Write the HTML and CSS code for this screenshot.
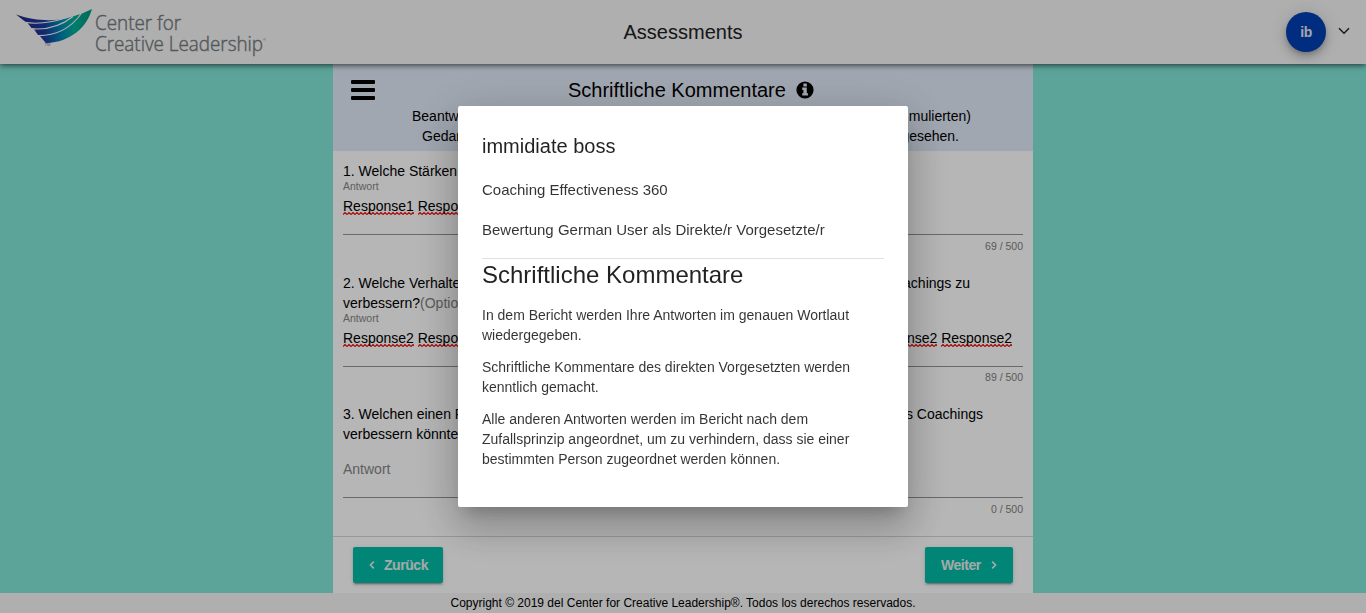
FILE: index.html
```html
<!DOCTYPE html>
<html lang="de">
<head>
<meta charset="utf-8">
<title>Assessments</title>
<link rel="stylesheet" href="styles.css">
</head>
<body>
<div class="app">
  <header class="topbar">
    <svg class="logo" width="270" height="60" viewBox="0 0 270 60">
      <defs>
        <linearGradient id="wing" x1="16" y1="22" x2="88" y2="12" gradientUnits="userSpaceOnUse">
          <stop offset="0" stop-color="#2b2486"/><stop offset=".36" stop-color="#1b3a9c"/>
          <stop offset=".6" stop-color="#0086b4"/><stop offset=".78" stop-color="#00b09a"/><stop offset="1" stop-color="#009a80"/>
        </linearGradient>
      </defs>
      <path fill="url(#wing)" d="M16 14.5C29 19.5 45 21 58 19.8C68 18.8 75 15 80 14.4L92 9C87 27 71 42 46 43.2L39.5 35.5L38 35L33.5 28.5L31.5 28L27.5 23L25 21.5Z"/>
      <path class="feather" d="M24 22.4C40 24.6 54 22 66 17.8M30 28.6C46 30.4 61 26 73 16.5M37 35.6C55 36 70 29 81 14"/>
      <text class="tm" x="44.5" y="46">TM</text>
      <text class="brand" x="95" y="30" textLength="86" lengthAdjust="spacingAndGlyphs">Center for</text>
      <text class="brand" x="95" y="50.5" textLength="168" lengthAdjust="spacingAndGlyphs">Creative Leadership</text>
      <text class="tm" x="263" y="41">®</text>
    </svg>
    <h1 class="topbar-title">Assessments</h1>
    <div class="account">
      <span class="avatar">ib</span>
      <svg width="12" height="8" viewBox="0 0 12 8"><path class="chevron" d="M1 1.2L6 6.2L11 1.2"/></svg>
    </div>
  </header>

  <main class="stage">
    <section class="sheet">
      <div class="intro">
        <div class="intro-head">
          <div class="menu"><i></i><i></i><i></i></div>
          <h2 class="intro-title">Schriftliche Kommentare</h2>
          <svg class="info" width="18" height="18" viewBox="0 0 18 18"><circle cx="9" cy="9" r="8.6"/><path fill="#e1eaf7" d="M7.4 2.6h3.4v2.8H7.4zM6.2 6.6h4.6v5.6H12v2.4H6.2v-2.4h1.2V9H6.2z"/></svg>
        </div>
        <p class="intro-line first"><span>Beantworten Sie</span><span>mulierten)</span></p>
        <p class="intro-line second"><span>Gedanken und</span><span>gesehen.</span></p>
      </div>

      <div class="question q1">
        <p class="ask">1. Welche Stärken</p>
        <p class="label">Antwort</p>
        <p class="answer"><span><u>Response1</u> <u>Response1</u></span></p>
        <p class="count">69 / 500</p>
      </div>
      <div class="question q2">
        <p class="ask split"><span>2. Welche Verhaltens</span><span>Coachings zu</span></p>
        <p class="ask">verbessern?<span class="muted">(Optional)</span></p>
        <p class="label">Antwort</p>
        <p class="answer"><span><u>Response2</u> <u>Response2</u></span><span><u>Response2</u> <u>Response2</u></span></p>
        <p class="count">89 / 500</p>
      </div>
      <div class="question q3">
        <p class="ask split"><span>3. Welchen einen Punkt</span><span>des Coachings</span></p>
        <p class="ask">verbessern könnte</p>
        <p class="answer empty">Antwort</p>
        <p class="count">0 / 500</p>
      </div>

      <div class="actions">
        <button class="btn"><svg width="6" height="8" viewBox="0 0 6 8"><path d="M4.8.6L1.4 4L4.8 7.4"/></svg>Zurück</button>
        <button class="btn next">Weiter<svg width="6" height="8" viewBox="0 0 6 8"><path d="M1.2.6L4.6 4L1.2 7.4"/></svg></button>
      </div>
    </section>
  </main>
  <footer class="footer">Copyright © 2019 del Center for Creative Leadership®. Todos los derechos reservados.</footer>
</div>

<div class="backdrop">
  <div class="dialog" role="dialog">
    <h3 class="dialog-name">immidiate boss</h3>
    <p class="dialog-sub">Coaching Effectiveness 360</p>
    <p class="dialog-sub">Bewertung German User als Direkte/r Vorgesetzte/r</p>
    <hr>
    <h2 class="dialog-title">Schriftliche Kommentare</h2>
    <p class="dialog-text">In dem Bericht werden Ihre Antworten im genauen Wortlaut<br>wiedergegeben.</p>
    <p class="dialog-text">Schriftliche Kommentare des direkten Vorgesetzten werden<br>kenntlich gemacht.</p>
    <p class="dialog-text">Alle anderen Antworten werden im Bericht nach dem<br>Zufallsprinzip angeordnet, um zu verhindern, dass sie einer<br>bestimmten Person zugeordnet werden können.</p>
  </div>
</div>
</body>
</html>
```
FILE: styles.css
```css
* { box-sizing: border-box; }
body { margin: 0; font: 14px/20px "Liberation Sans", Arial, sans-serif; color: #000; overflow: hidden; }
h1, h2, h3, p { margin: 0; font-weight: 400; }
.app { height: 613px; display: flex; flex-direction: column; }
.topbar { height: 64px; flex: none; display: grid; grid-template-columns: 1fr auto 1fr; background: #f5f5f5; box-shadow: 0 1px 6px rgba(0,0,0,.7); z-index: 1; }
.logo { display: block; }
.brand { font: 300 20.5px "Open Sans", sans-serif; fill: #757c7f; stroke: #757c7f; stroke-width: .45px; }
.tm { font-size: 4px; fill: #77808a; }
.feather { fill: none; stroke: #f5f5f5; stroke-width: 1.1px; }
.topbar-title { font-size: 20px; line-height: 64px; color: #212121; }
.account { display: flex; justify-content: flex-end; align-items: center; gap: 12px; padding-right: 16px; }
.avatar { width: 40px; height: 40px; border-radius: 50%; background: #003fb2; color: #e4e8f0; font-weight: 700; letter-spacing: -.4px; line-height: 41px; text-align: center; box-shadow: 0 3px 5px -1px rgba(0,0,0,.2), 0 6px 10px rgba(0,0,0,.14), 0 1px 18px rgba(0,0,0,.12); }
.chevron { fill: none; stroke: #1c2430; stroke-width: 1.5px; }
.account > svg { margin-bottom: 3px; }
.stage { flex: 1; background: #81e5d8; display: flex; justify-content: center; }
.sheet { width: 700px; background: #fff; display: flex; flex-direction: column; }
.intro { height: 87px; background: #e1eaf7; padding-top: 16px; }
.intro-head { display: flex; align-items: center; height: 20px; margin-bottom: 6px; }
.menu { width: 24px; height: 20px; margin-left: 18px; display: flex; flex-direction: column; justify-content: space-between; }
.menu i { height: 4px; background: #000; border-radius: 1px; }
.intro-title { font-size: 20px; margin-left: 193px; }
.info { margin-left: 10px; }
.intro-line { display: flex; justify-content: space-between; }
.first { width: 559px; margin-left: 79px; }
.second { width: 537px; margin-left: 89px; }
.question { padding: 0 10px; }
.q1 { height: 112px; padding-top: 10px; }
.q2 { height: 131px; padding-top: 10px; }
.q3 { height: 142px; padding-top: 10px; }
.split { display: flex; justify-content: space-between; }
.q2 .split { width: 627px; }
.q3 .split { width: 640px; }
.muted { color: #808080; }
.label { font-size: 10.5px; line-height: 11px; color: #858585; }
.answer { height: 43px; padding-top: 4px; border-bottom: 1px solid #949494; display: flex; justify-content: space-between; padding-right: 11px; }
/* Tight red zigzag directly under the baseline */
.answer u { text-decoration: none; padding-bottom: 1px; background: url("data:image/svg+xml,%3Csvg xmlns='http://www.w3.org/2000/svg' width='4' height='3'%3E%3Cpath d='M0 2.5L2 .5L4 2.5' fill='none' stroke='%23f00000' stroke-width='1.1'/%3E%3C/svg%3E") repeat-x 0 100%; }
.answer.empty { height: 54px; padding-top: 15px; color: #858585; }
.count { font-size: 10.5px; line-height: 22px; text-align: right; color: #808080; }
.q2 .count { line-height: 21px; }
.actions { flex: 1; border-top: 1px solid #d5d5d5; display: flex; justify-content: space-between; padding: 10px 20px; }
.btn { height: 36px; width: 90px; padding: 0 0 0 16px; border: 0; border-radius: 2px; background: #00bba7; color: #e6eeee; font: 700 14px "Liberation Sans", Arial, sans-serif; letter-spacing: -.45px; display: flex; align-items: center; gap: 9px; box-shadow: 0 3px 1px -2px rgba(0,0,0,.2), 0 2px 2px rgba(0,0,0,.14), 0 1px 5px rgba(0,0,0,.12); }
.btn.next { width: 88px; gap: 10px; }
.btn path { fill: none; stroke: #f0f0f0; stroke-width: 1.5px; }
.footer { height: 20px; background: #f5f5f5; font-size: 12px; text-align: center; }
.backdrop { position: fixed; inset: 0; z-index: 5; display: grid; place-items: center; background: rgba(0,0,0,.288); }
.dialog { width: 450px; height: 401px; padding: 24px; background: #fff; border-radius: 2px; color: rgba(0,0,0,.87); box-shadow: 0 11px 15px -7px rgba(0,0,0,.2), 0 24px 38px 3px rgba(0,0,0,.14), 0 9px 46px 8px rgba(0,0,0,.12); }
.dialog-name { font-size: 20px; line-height: 32px; margin-bottom: 16px; }
.dialog-sub { font-size: 15px; line-height: 24px; margin-bottom: 16px; color: rgba(0,0,0,.8); }
.dialog hr { border: 0; height: 1px; margin: 0; background: #e0e0e0; }
.dialog-title { font-size: 24px; line-height: 32px; margin-bottom: 14px; }
.dialog-text { margin-bottom: 12px; color: rgba(0,0,0,.8); }
```
